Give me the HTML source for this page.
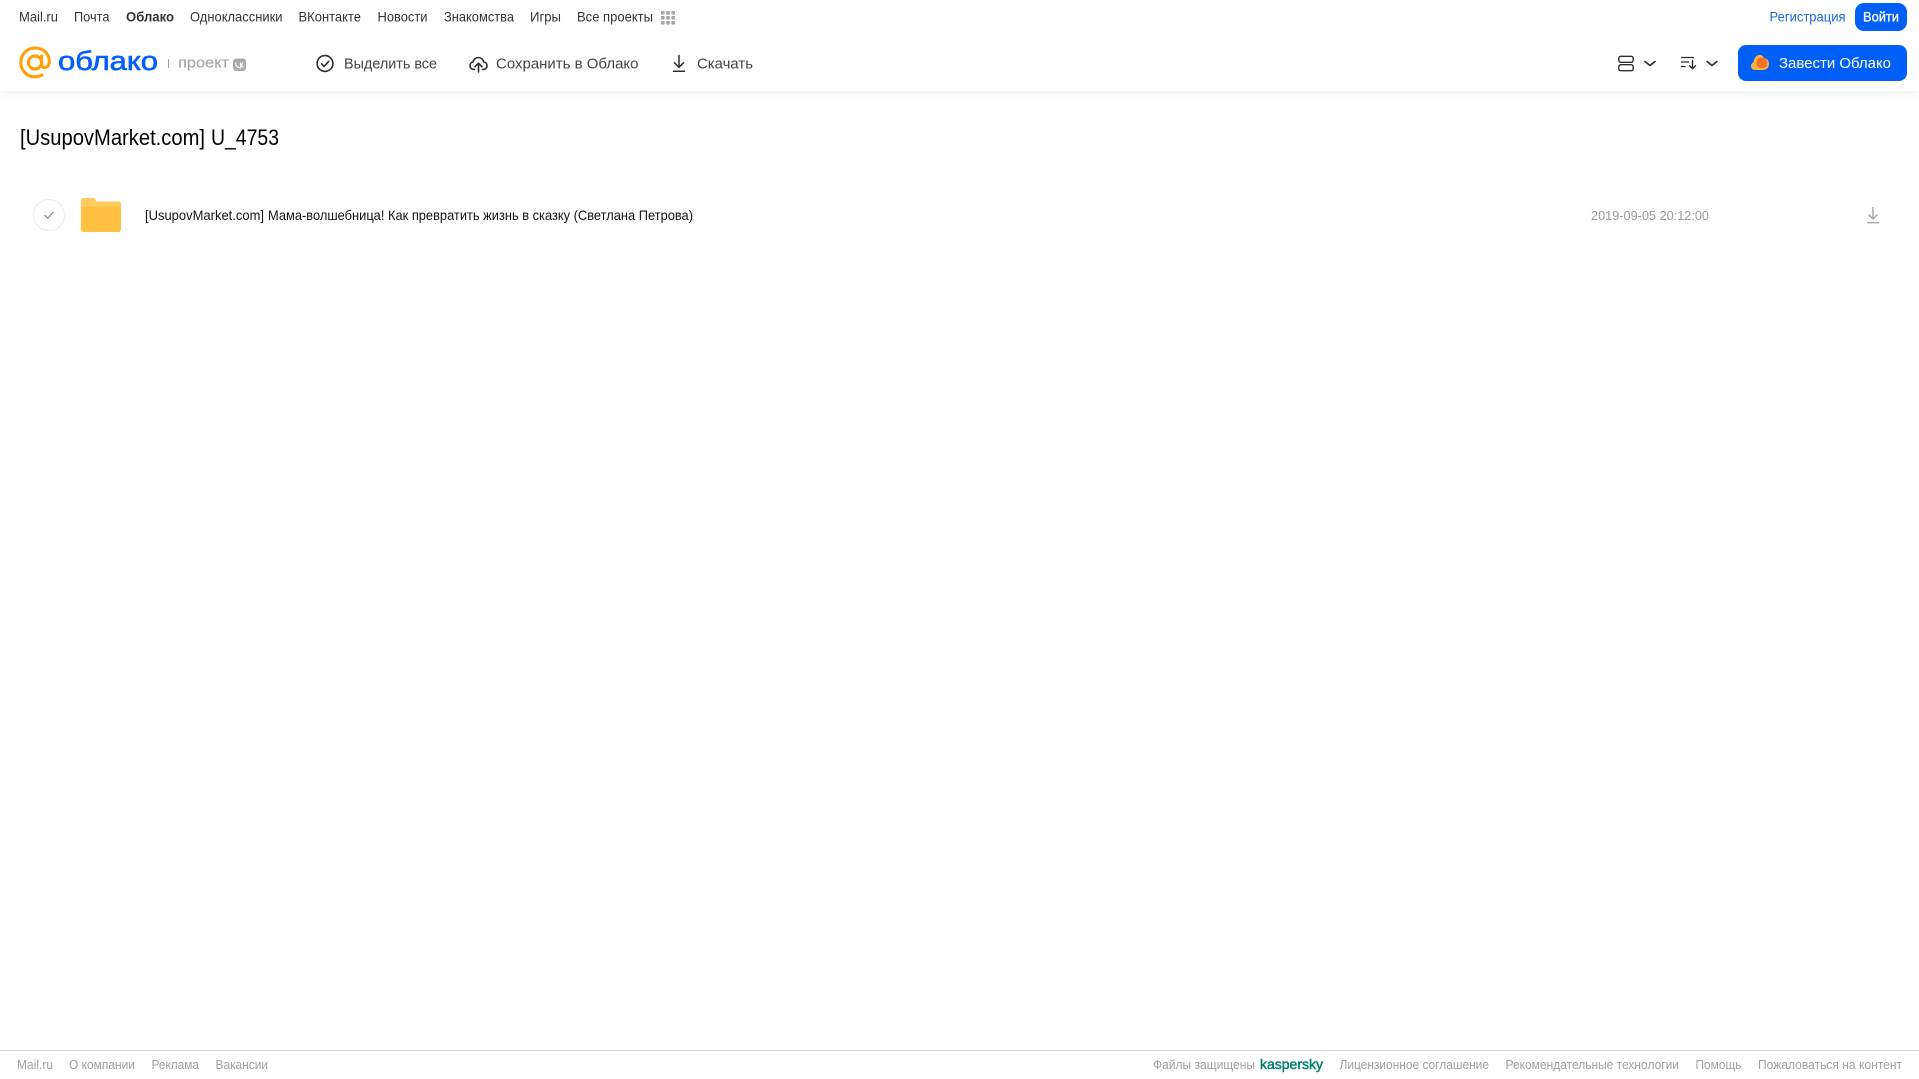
<!DOCTYPE html>
<html lang="ru">
<head>
<meta charset="utf-8">
<title>[UsupovMarket.com] U_4753</title>
<style>
html,body{margin:0;padding:0;width:1919px;height:1079px;overflow:hidden;background:#fff}
#hd{position:absolute;left:0;top:0;width:1919px;height:91px;background:#fff;box-shadow:0 2px 10px rgba(0,0,0,.07)}
svg{position:absolute;left:0;top:0;display:block}
text{font-family:"Liberation Sans","Noto Sans CJK SC",sans-serif;white-space:pre}
.n{font-size:14px;fill:#333}
.a{font-size:15px;fill:#444}
.f{font-size:13px;fill:#a0a0a0}
</style>
</head>
<body>
<div id="hd"></div>
<svg width="1919" height="1079" viewBox="0 0 1919 1079" xmlns="http://www.w3.org/2000/svg">
<!-- top nav -->
<text class="n" x="19" y="21.5" textLength="39" lengthAdjust="spacingAndGlyphs">Mail.ru</text>
<text class="n" x="74" y="21.5" textLength="35.500" lengthAdjust="spacingAndGlyphs">Почта</text>
<text class="n" x="126" y="21.5" textLength="48" lengthAdjust="spacingAndGlyphs" font-weight="700">Облако</text>
<text class="n" x="190" y="21.5" textLength="92.500" lengthAdjust="spacingAndGlyphs">Одноклассники</text>
<text class="n" x="298.500" y="21.5" textLength="62.500" lengthAdjust="spacingAndGlyphs">ВКонтакте</text>
<text class="n" x="377.500" y="21.5" textLength="50" lengthAdjust="spacingAndGlyphs">Новости</text>
<text class="n" x="444" y="21.5" textLength="70" lengthAdjust="spacingAndGlyphs">Знакомства</text>
<text class="n" x="530" y="21.5" textLength="31" lengthAdjust="spacingAndGlyphs">Игры</text>
<text class="n" x="577" y="21.5" textLength="76" lengthAdjust="spacingAndGlyphs">Все проекты</text>
<g fill="#a5a5a5">
<rect x="661" y="11" width="3.6" height="3.6" rx=".8"/><rect x="666.2" y="11" width="3.6" height="3.6" rx=".8"/><rect x="671.4" y="11" width="3.6" height="3.6" rx=".8"/>
<rect x="661" y="16" width="3.6" height="3.6" rx=".8"/><rect x="666.2" y="16" width="3.6" height="3.6" rx=".8"/><rect x="671.4" y="16" width="3.6" height="3.6" rx=".8"/>
<rect x="661" y="21" width="3.6" height="3.6" rx=".8"/><rect x="666.2" y="21" width="3.6" height="3.6" rx=".8"/><rect x="671.4" y="21" width="3.6" height="3.6" rx=".8"/>
</g>
<text x="1769.5" y="21.5" font-size="14" fill="#1a6bdc" textLength="76" lengthAdjust="spacingAndGlyphs">Регистрация</text>
<rect x="1855" y="3" width="52" height="28" rx="9" fill="#005ff9"/>
<text x="1863" y="21.5" font-size="14" fill="#fff" stroke="#fff" stroke-width=".35" textLength="36" lengthAdjust="spacingAndGlyphs">Войти</text>

<!-- logo -->
<g fill="none" stroke="#ffa00a" stroke-width="3.1" stroke-linecap="round">
<circle cx="35" cy="62.5" r="6.6"/>
<path d="M41.6 56V64.5C41.6 68.8 49 68.8 49.2 62C49.5 52.8 42.5 48 35 48C26.8 48 20.8 54.3 20.8 62.5C20.8 70.7 27 76.8 35 76.8C37.6 76.8 39.8 76.3 42 75"/>
</g>
<text x="58" y="70" font-size="27" fill="#005ff9" stroke="#005ff9" stroke-width=".6" textLength="100" lengthAdjust="spacingAndGlyphs">облако</text>
<rect x="168" y="59" width="1" height="9" fill="#a5a5a5"/>
<text x="178" y="67.5" font-size="15" fill="#a5a7ab" stroke="#a5a7ab" stroke-width=".2" textLength="51" lengthAdjust="spacingAndGlyphs">проект</text>
<rect x="233" y="58.5" width="13" height="12.5" rx="3" fill="#a9abae"/>
<path d="M235.5 62.5C235.7 66 237.6 67.8 240.6 67.8V65.4M240.6 62.5V65C241.8 65.1 242.4 64 242.9 62.5M240.6 65.3C241.9 65.5 242.6 66.7 243.2 67.8" fill="none" stroke="#fff" stroke-width="1.1"/>

<!-- actions -->
<circle cx="325" cy="63.5" r="7.9" fill="none" stroke="#2c2d2e" stroke-width="1.6"/>
<path d="M321.5 63.8l2.6 2.6 4.6-5" fill="none" stroke="#2c2d2e" stroke-width="1.6" stroke-linecap="round" stroke-linejoin="round"/>
<text class="a" x="344" y="68.5" textLength="93" lengthAdjust="spacingAndGlyphs">Выделить все</text>

<path d="M474.5 69.5H474C471.5 69.5 470 67.7 470 65.7C470 63.7 471.4 62.3 473 62C473.5 59.4 475.6 57.5 478.3 57.5C481 57.5 483.2 59.5 483.7 62C485.6 62.2 487 63.8 487 65.7C487 67.8 485.4 69.5 483 69.5H482.5" fill="none" stroke="#2c2d2e" stroke-width="1.6" stroke-linejoin="round" stroke-linecap="round"/>
<path d="M478.5 72V63.5M475 66.7l3.5-3.5 3.5 3.5" fill="none" stroke="#2c2d2e" stroke-width="1.6" stroke-linecap="round" stroke-linejoin="round"/>
<text class="a" x="496" y="68.5" textLength="142.500" lengthAdjust="spacingAndGlyphs">Сохранить в Облако</text>

<path d="M679 55.500V67M674.500 62.800l4.500 4.500 4.500-4.500M673.500 71.300H684.500" fill="none" stroke="#2c2d2e" stroke-width="1.500" stroke-linecap="round" stroke-linejoin="round"/>
<text class="a" x="697" y="68.500" textLength="56" lengthAdjust="spacingAndGlyphs">Скачать</text>

<!-- view controls -->
<rect x="1618.8" y="56.300" width="14.400" height="6" rx="2" fill="none" stroke="#2c2d2e" stroke-width="1.400"/>
<rect x="1618.8" y="64.700" width="14.400" height="6" rx="2" fill="none" stroke="#2c2d2e" stroke-width="1.400"/>
<path d="M1645 61.500l5 4 5-4" fill="none" stroke="#2c2d2e" stroke-width="1.700" stroke-linecap="round" stroke-linejoin="round"/>
<path d="M1681 57.500H1694M1681 62H1689M1681 66.500H1685.500" fill="none" stroke="#2c2d2e" stroke-width="1.300"/>
<path d="M1692.500 60.500V68.500M1689.500 65.800l3 3 3-3" fill="none" stroke="#2c2d2e" stroke-width="1.400" stroke-linecap="round" stroke-linejoin="round"/>
<path d="M1707 61.500l5 4 5-4" fill="none" stroke="#2c2d2e" stroke-width="1.700" stroke-linecap="round" stroke-linejoin="round"/>

<!-- CTA -->
<rect x="1738" y="45" width="169" height="36" rx="8" fill="#005ff9"/>
<path d="M1755 70C1752.500 70 1751 68.200 1751 66C1751 64 1752.300 62.700 1753.600 62.200C1753.900 58.200 1756.400 55 1759.500 55C1761.800 55 1763.300 56.300 1764 58C1767 58.300 1769 60.700 1769 64C1769 67.500 1766.500 70 1763 70Z" fill="#ffb13d"/>
<circle cx="1762" cy="63" r="5.400" fill="#f5712b"/>
<text x="1779" y="68" font-size="15" fill="#fff" textLength="112" lengthAdjust="spacingAndGlyphs">Завести Облако</text>

<!-- title -->
<text x="20" y="145" font-size="22" fill="#000" textLength="185" lengthAdjust="spacingAndGlyphs">[UsupovMarket.com]</text>
<text x="211" y="145" font-size="22" fill="#000" textLength="68" lengthAdjust="spacingAndGlyphs">U_4753</text>

<!-- row -->
<circle cx="49" cy="215" r="15.500" fill="#fff" stroke="#ececec" stroke-width="1"/>
<path d="M45 215.500l2.800 2.800 5.200-6" fill="none" stroke="#8f8f8f" stroke-width="1.300" stroke-linecap="round" stroke-linejoin="round"/>
<path d="M81 201C81 199 82 198 84 198H92.500C94.500 198 95.500 199.500 96.500 201.500H118C120 201.500 121 202.500 121 204.500V229C121 231 120 232 118 232H84C82 232 81 231 81 229Z" fill="#ffc043"/>
<path d="M81 201C81 199 82 198 84 198H92.500C94.500 198 95.500 199.500 96.500 201.500H118C120 201.500 121 202.500 121 204.500V207H81Z" fill="#ffcb5c"/>
<text x="145" y="220" font-size="14" fill="#1a1014" textLength="119" lengthAdjust="spacingAndGlyphs">[UsupovMarket.com]</text>
<text x="268" y="220" font-size="14" fill="#1a1014" textLength="425" lengthAdjust="spacingAndGlyphs">Мама-волшебница! Как превратить жизнь в сказку (Светлана Петрова)</text>
<text x="1591" y="220" font-size="13" fill="#999" textLength="118" lengthAdjust="spacingAndGlyphs">2019-09-05 20:12:00</text>
<path d="M1873 207V219M1868.500 214.500l4.500 4.500 4.500-4.500M1867 222.600H1879" fill="none" stroke="#a8a8a8" stroke-width="1.500" stroke-linejoin="round"/>

<!-- footer -->
<rect x="0" y="1050" width="1919" height="1" fill="#d9d9d9"/>
<text class="f" x="17" y="1069" textLength="36" lengthAdjust="spacingAndGlyphs">Mail.ru</text>
<text class="f" x="69" y="1069" textLength="66" lengthAdjust="spacingAndGlyphs">О компании</text>
<text class="f" x="151.500" y="1069" textLength="47.500" lengthAdjust="spacingAndGlyphs">Реклама</text>
<text class="f" x="215.500" y="1069" textLength="52.500" lengthAdjust="spacingAndGlyphs">Вакансии</text>
<text class="f" x="1153" y="1069" textLength="102" lengthAdjust="spacingAndGlyphs">Файлы защищены</text>
<text x="1260" y="1069" font-size="14" fill="#00816a" stroke="#00816a" stroke-width=".45" textLength="63" lengthAdjust="spacingAndGlyphs">kaspersky</text>
<text class="f" x="1339.500" y="1069" textLength="149.500" lengthAdjust="spacingAndGlyphs">Лицензионное соглашение</text>
<text class="f" x="1505.500" y="1069" textLength="173.500" lengthAdjust="spacingAndGlyphs">Рекомендательные технологии</text>
<text class="f" x="1695.500" y="1069" textLength="46" lengthAdjust="spacingAndGlyphs">Помощь</text>
<text class="f" x="1758" y="1069" textLength="144" lengthAdjust="spacingAndGlyphs">Пожаловаться на контент</text>
</svg>
</body>
</html>
